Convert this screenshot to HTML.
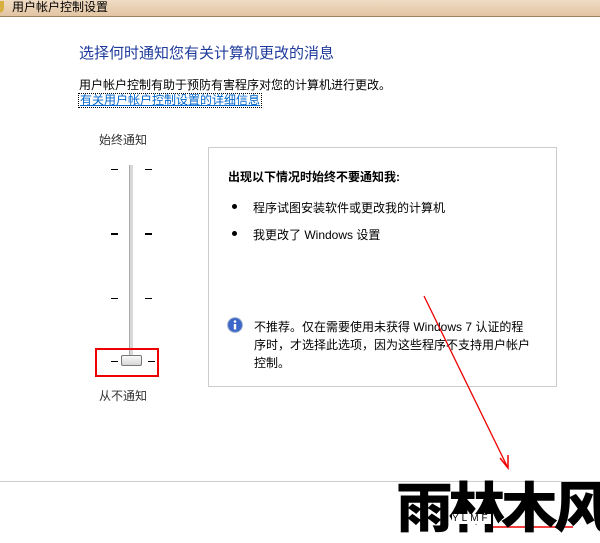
<!DOCTYPE html>
<html><head><meta charset="utf-8"><style>
*{margin:0;padding:0;box-sizing:border-box}
body{width:600px;height:531px;background:#fff;position:relative;overflow:hidden;font-family:"Liberation Sans","Noto Sans CJK SC",sans-serif;font-size:12px;color:#000}
.t{position:absolute;white-space:nowrap}
</style></head><body>
<div style="position:absolute;left:0;top:0;width:600px;height:17px;background:linear-gradient(#f0dcc4,#e2c4a2);border-bottom:1px solid #a08060"></div>
<div style="position:absolute;left:-6px;top:1px;width:10px;height:12px;background:#d8b040;border-radius:0 0 5px 5px"></div>
<div class="t" style="left:12px;top:0px;font-size:12px;line-height:15px">用户帐户控制设置</div>
<div class="t" style="left:79px;top:42px;font-size:15px;color:#1e3a9c">选择何时通知您有关计算机更改的消息</div>
<div class="t" style="left:79px;top:78px;line-height:14px">用户帐户控制有助于预防有害程序对您的计算机进行更改。</div>
<div class="t" style="left:79px;top:94px;color:#0066cc;text-decoration:underline;outline:1px dotted #000;line-height:13px;padding:0 1px">有关用户帐户控制设置的详细信息</div>
<div class="t" style="left:99px;top:131px;color:#333">始终通知</div>
<div class="t" style="left:99px;top:387px;color:#333">从不通知</div>
<div style="position:absolute;left:129px;top:165px;width:4px;height:198px;background:#d8d8d8;border-left:1px solid #aaa"></div>
<div style="position:absolute;left:111px;top:169px;width:7px;height:1px;background:#000"></div>
<div style="position:absolute;left:145px;top:169px;width:7px;height:1px;background:#000"></div>
<div style="position:absolute;left:111px;top:233px;width:7px;height:2px;background:#000"></div>
<div style="position:absolute;left:145px;top:233px;width:7px;height:2px;background:#000"></div>
<div style="position:absolute;left:111px;top:298px;width:7px;height:1px;background:#000"></div>
<div style="position:absolute;left:145px;top:298px;width:7px;height:1px;background:#000"></div>
<div style="position:absolute;left:111px;top:361px;width:7px;height:1px;background:#000"></div>
<div style="position:absolute;left:148px;top:361px;width:7px;height:1px;background:#000"></div>
<div style="position:absolute;left:121px;top:355px;width:21px;height:11px;border:1px solid #777;border-radius:2px;background:linear-gradient(#fafafa,#d6d6d6)"></div>
<div style="position:absolute;left:95px;top:348px;width:64px;height:29px;border:2px solid #e00"></div>
<div style="position:absolute;left:208px;top:147px;width:349px;height:240px;border:1px solid #ccc"></div>
<div class="t" style="left:228px;top:168px;font-weight:bold">出现以下情况时始终不要通知我:</div>
<div style="position:absolute;left:232px;top:204px;width:5px;height:5px;border-radius:50%;background:#000"></div>
<div class="t" style="left:253px;top:199px">程序试图安装软件或更改我的计算机</div>
<div style="position:absolute;left:232px;top:231px;width:5px;height:5px;border-radius:50%;background:#000"></div>
<div class="t" style="left:253px;top:226px">我更改了 Windows 设置</div>
<svg style="position:absolute;left:227px;top:317px" width="16" height="16"><circle cx="8" cy="8" r="7.3" fill="#3a66c8" stroke="#8aa0c8"/><circle cx="8" cy="4.5" r="1.3" fill="#fff"/><rect x="6.8" y="7" width="2.4" height="5.5" fill="#fff"/></svg>
<div class="t" style="left:254px;top:318px;line-height:18px">不推荐。仅在需要使用未获得 Windows 7 认证的程<br>序时，才选择此选项，因为这些程序不支持用户帐户<br>控制。</div>
<div style="position:absolute;left:0;top:481px;width:600px;height:1px;background:#ccc"></div>
<svg style="position:absolute;left:0;top:0" width="600" height="531"><line x1="424" y1="296" x2="507" y2="466" stroke="#e00" stroke-width="1.3"/><path d="M500 458 L508 468 L508 455" fill="none" stroke="#e00" stroke-width="1.5"/><line x1="492" y1="527" x2="573" y2="527" stroke="#e00" stroke-width="1.5"/></svg>
<div class="t" style="left:396px;top:476px;font-size:54px;font-weight:900;font-family:'Noto Sans CJK SC',sans-serif;letter-spacing:-4px;line-height:56px;transform-origin:0 0;transform:scaleX(1.05)">雨林木风</div>
<div class="t" style="left:452px;top:514px;font-size:10px;letter-spacing:3px;background:#fff;line-height:10px">YLMF</div>
</body></html>
